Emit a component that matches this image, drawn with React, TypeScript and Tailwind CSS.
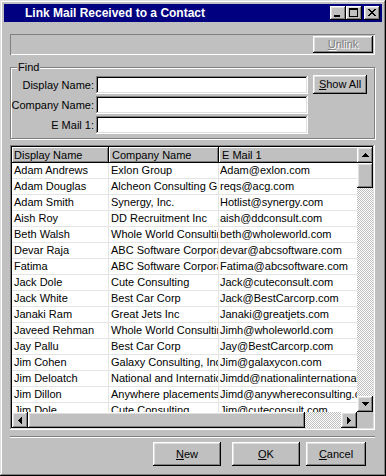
import React from "react";

const raised =
  "shadow-[inset_-1px_-1px_#000,inset_1px_1px_#fff,inset_-2px_-2px_#808080,inset_2px_2px_#dfdfdf]";
const sunken =
  "shadow-[inset_-1px_-1px_#fff,inset_1px_1px_#808080,inset_-2px_-2px_#dfdfdf,inset_2px_2px_#000]";
const headerCell =
  "shadow-[inset_-1px_-1px_#000,inset_1px_1px_#fff,inset_-2px_-2px_#808080]";
const checker =
  "bg-[image:repeating-conic-gradient(#c0c0c0_0%_25%,#ffffff_0%_50%)] bg-[length:2px_2px]";

const rows: [string, string, string][] = [
  ["Adam Andrews", "Exlon Group", "Adam@exlon.com"],
  ["Adam Douglas", "Alcheon Consulting Group", "reqs@acg.com"],
  ["Adam Smith", "Synergy, Inc.", "Hotlist@synergy.com"],
  ["Aish Roy", "DD Recruitment Inc", "aish@ddconsult.com"],
  ["Beth Walsh", "Whole World Consulting", "beth@wholeworld.com"],
  ["Devar Raja", "ABC Software Corporation", "devar@abcsoftware.com"],
  ["Fatima", "ABC Software Corporation", "Fatima@abcsoftware.com"],
  ["Jack Dole", "Cute Consulting", "Jack@cuteconsult.com"],
  ["Jack White", "Best Car Corp", "Jack@BestCarcorp.com"],
  ["Janaki Ram", "Great Jets Inc", "Janaki@greatjets.com"],
  ["Javeed Rehman", "Whole World Consulting", "Jimh@wholeworld.com"],
  ["Jay Pallu", "Best Car Corp", "Jay@BestCarcorp.com"],
  ["Jim Cohen", "Galaxy Consulting, Inc.", "Jim@galaxycon.com"],
  ["Jim Deloatch", "National and International", "Jimdd@nationalinternational.com"],
  ["Jim Dillon", "Anywhere placements", "Jimd@anywhereconsulting.com"],
  ["Jim Dole", "Cute Consulting", "Jim@cuteconsult.com"],
];

function Arrow({ dir }: { dir: "up" | "down" | "left" | "right" }) {
  const rects: React.ReactNode[] = [];
  for (let i = 0; i < 4; i++) {
    const len = 7 - i * 2;
    if (dir === "up") rects.push(<rect key={i} x={i} y={3 - i} width={len} height={1} />);
    if (dir === "down") rects.push(<rect key={i} x={i} y={i} width={len} height={1} />);
    if (dir === "left") rects.push(<rect key={i} x={3 - i} y={i} width={1} height={len} />);
    if (dir === "right") rects.push(<rect key={i} x={i} y={i} width={1} height={len} />);
  }
  const vertical = dir === "up" || dir === "down";
  return (
    <svg
      width={vertical ? 7 : 4}
      height={vertical ? 4 : 7}
      viewBox={vertical ? "0 0 7 4" : "0 0 4 7"}
      shapeRendering="crispEdges"
      fill="#000"
    >
      {rects}
    </svg>
  );
}

function ScrollBtn({ dir }: { dir: "up" | "down" | "left" | "right" }) {
  return (
    <div className={`w-[16px] h-[16px] shrink-0 bg-[#c0c0c0] flex items-center justify-center ${raised}`}>
      <Arrow dir={dir} />
    </div>
  );
}

function Btn({
  children,
  className = "",
  disabled = false,
}: {
  children: React.ReactNode;
  className?: string;
  disabled?: boolean;
}) {
  return (
    <div
      className={`bg-[#c0c0c0] flex items-center justify-center ${raised} ${
        disabled ? "text-[#808080] [text-shadow:1px_1px_0_#fff]" : "text-black"
      } ${className}`}
    >
      {children}
    </div>
  );
}

export default function App() {
  return (
    <div className="w-[386px] h-[476px] bg-[#c0c0c0] p-[4px] flex flex-col font-['Liberation_Sans',Arial,sans-serif] text-[11px] text-black leading-none shadow-[inset_-1px_-1px_#000,inset_1px_1px_#dfdfdf,inset_-2px_-2px_#808080,inset_2px_2px_#fff] overflow-hidden">
      {/* Title bar */}
      <div className="h-[18px] bg-[#000080] flex items-center shrink-0">
        <span className="pl-[21px] text-white font-bold text-[12px] whitespace-nowrap">
          Link Mail Received to a Contact
        </span>
        <div className="ml-auto flex items-center mr-[2px]">
          <div className={`w-[16px] h-[14px] bg-[#c0c0c0] relative ${raised}`}>
            <svg className="absolute left-[4px] top-[3px]" width="8" height="8" viewBox="0 0 8 8" shapeRendering="crispEdges">
              <rect x="0" y="6" width="6" height="2" fill="#000" />
            </svg>
          </div>
          <div className={`w-[16px] h-[14px] bg-[#c0c0c0] relative ${raised}`}>
            <svg className="absolute left-[3px] top-[2px]" width="9" height="9" viewBox="0 0 9 9" shapeRendering="crispEdges" fill="#000">
              <rect x="0" y="0" width="9" height="2" />
              <rect x="0" y="0" width="1" height="9" />
              <rect x="8" y="0" width="1" height="9" />
              <rect x="0" y="8" width="9" height="1" />
            </svg>
          </div>
          <div className={`w-[16px] h-[14px] bg-[#c0c0c0] relative ml-[2px] ${raised}`}>
            <svg className="absolute left-[4px] top-[3px]" width="8" height="7" viewBox="0 0 8 7" shapeRendering="crispEdges" fill="#000">
              <rect x="0" y="0" width="2" height="1" />
              <rect x="6" y="0" width="2" height="1" />
              <rect x="1" y="1" width="2" height="1" />
              <rect x="5" y="1" width="2" height="1" />
              <rect x="2" y="2" width="4" height="1" />
              <rect x="3" y="3" width="2" height="1" />
              <rect x="2" y="4" width="4" height="1" />
              <rect x="1" y="5" width="2" height="1" />
              <rect x="5" y="5" width="2" height="1" />
              <rect x="0" y="6" width="2" height="1" />
              <rect x="6" y="6" width="2" height="1" />
            </svg>
          </div>
        </div>
      </div>

      {/* Content */}
      <div className="ml-[6px] w-[365px] flex flex-col">
        {/* Top panel */}
        <div className="mt-[12px] h-[21px] flex items-center justify-end pr-[2px] shadow-[inset_1px_1px_#808080,inset_-1px_-1px_#fff]">
          <Btn disabled className="w-[60px] h-[17px]">
            <span>
              <span className="underline">U</span>nlink
            </span>
          </Btn>
        </div>

        {/* Find group */}
        <div className="mt-[12px] h-[72px] relative border border-[#808080] shadow-[1px_1px_0_#fff,inset_1px_1px_0_#fff] flex pt-[8px]">
          <span className="absolute left-[6px] top-[-7px] bg-[#c0c0c0] px-[1px] leading-[13px]">Find</span>
          <div className="flex flex-col gap-[2px]">
            {["Display Name:", "Company Name:", "E Mail 1:"].map((l) => (
              <div key={l} className="flex items-center h-[18px]">
                <span className="w-[84px] text-right pr-[1px] whitespace-nowrap">{l}</span>
                <div className={`ml-[1px] w-[212px] h-[18px] bg-white ${sunken}`} />
              </div>
            ))}
          </div>
          <Btn className="ml-[5px] w-[54px] h-[19px] -mt-[1px]">
            <span>
              <span className="underline">S</span>how All
            </span>
          </Btn>
        </div>

        {/* List */}
        <div className={`mt-[6px] h-[285px] p-[2px] bg-white flex flex-col ${sunken}`}>
          <div className="flex h-[265px]">
            <div className="flex-1 flex flex-col overflow-hidden">
              <div className="flex h-[16px] shrink-0 bg-[#c0c0c0]">
                <div className={`w-[97px] shrink-0 flex items-center pl-[2px] ${headerCell}`}>Display Name</div>
                <div className={`w-[110px] shrink-0 flex items-center pl-[3px] ${headerCell}`}>Company Name</div>
                <div className={`w-[160px] shrink-0 flex items-center pl-[3px] ${headerCell}`}>E Mail 1</div>
              </div>
              {rows.map((r) => (
                <div key={r[0]} className="flex h-[16px] shrink-0 border-b border-[#e4e4e4]">
                  <div className="w-[97px] shrink-0 overflow-hidden whitespace-nowrap pl-[2px] flex items-center border-r border-[#e4e4e4]">
                    {r[0]}
                  </div>
                  <div className="w-[110px] shrink-0 overflow-hidden whitespace-nowrap pl-[2px] flex items-center border-r border-[#e4e4e4]">
                    {r[1]}
                  </div>
                  <div className="w-[200px] shrink-0 overflow-hidden whitespace-nowrap pl-[1px] flex items-center">
                    {r[2]}
                  </div>
                </div>
              ))}
            </div>
            <div className="w-[16px] flex flex-col shrink-0">
              <ScrollBtn dir="up" />
              <div className={`h-[25px] shrink-0 bg-[#c0c0c0] ${raised}`} />
              <div className={`flex-1 ${checker}`} />
              <ScrollBtn dir="down" />
            </div>
          </div>
          <div className="flex h-[16px] shrink-0">
            <ScrollBtn dir="left" />
            <div className={`w-[277px] shrink-0 bg-[#c0c0c0] ${raised}`} />
            <div className={`flex-1 ${checker}`} />
            <ScrollBtn dir="right" />
            <div className="w-[16px] shrink-0 bg-[#c0c0c0]" />
          </div>
        </div>

        {/* Separator */}
        <div className="mt-[6px] h-[2px] border-t border-[#808080] border-b border-b-white" />

        {/* Buttons */}
        <div className="mt-[4px] flex">
          <Btn className="ml-[143px] w-[68px] h-[24px]">
            <span>
              <span className="underline">N</span>ew
            </span>
          </Btn>
          <Btn className="ml-[11px] w-[68px] h-[24px]">
            <span>
              <span className="underline">O</span>K
            </span>
          </Btn>
          <Btn className="ml-[6px] w-[60px] h-[24px]">
            <span>
              <span className="underline">C</span>ancel
            </span>
          </Btn>
        </div>
      </div>
    </div>
  );
}
